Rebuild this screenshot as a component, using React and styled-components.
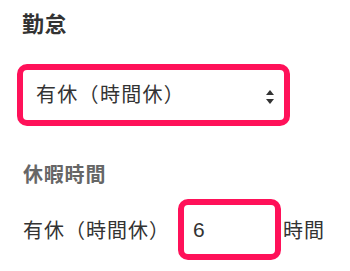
import styled, { createGlobalStyle } from "styled-components";

const Global = createGlobalStyle`
  body {
    margin: 0;
    background: #fff;
    font-family: "Liberation Sans", "Noto Sans CJK JP", sans-serif;
    color: #333;
  }
`;

const Page = styled.div`
  padding: 14px 0 0 17px;
`;

const Title = styled.h2`
  margin: 0 0 0 5px;
  font-size: 22px;
  line-height: 1;
  font-weight: bold;
  letter-spacing: 0.5px;
  color: #333;
`;

const SelectWrap = styled.div`
  position: relative;
  width: 273px;
  margin-top: 28px;
`;

const Select = styled.select`
  appearance: none;
  -webkit-appearance: none;
  display: block;
  width: 273px;
  height: 62px;
  box-sizing: border-box;
  border: 6px solid #ff1159;
  border-radius: 10px;
  background: #fff;
  padding: 0 0 0 13px;
  font-family: inherit;
  font-size: 20px;
  letter-spacing: 1.3px;
  color: #333;
  outline: none;
`;

const Arrows = styled.svg`
  position: absolute;
  right: 16px;
  top: 26px;
  pointer-events: none;
`;

const SubTitle = styled.h3`
  margin: 39px 0 0 6px;
  font-size: 20px;
  line-height: 1;
  font-weight: bold;
  letter-spacing: 0.8px;
  color: #666;
`;

const Row = styled.div`
  display: flex;
  align-items: center;
  margin-top: 14px;
`;

const Label = styled.span`
  margin-left: 6px;
  font-size: 20px;
  letter-spacing: 1px;
  color: #333;
`;

const Input = styled.input`
  width: 103px;
  height: 61px;
  box-sizing: border-box;
  margin-left: 8px;
  border: 6px solid #ff1159;
  border-radius: 10px;
  padding: 0 0 0 9px;
  font-family: inherit;
  font-size: 21px;
  color: #333;
  outline: none;
`;

const Unit = styled.span`
  margin-left: 2px;
  font-size: 20px;
  letter-spacing: 1px;
  color: #333;
`;

export default function App() {
  return (
    <>
      <Global />
      <Page>
        <Title>勤怠</Title>
        <SelectWrap>
          <Select defaultValue="hourly">
            <option value="hourly">有休（時間休）</option>
          </Select>
          <Arrows width="8" height="14" viewBox="0 0 8 14">
            <path d="M4 0 L8 5 L0 5 Z" fill="#333" />
            <path d="M0 9 L8 9 L4 14 Z" fill="#333" />
          </Arrows>
        </SelectWrap>
        <SubTitle>休暇時間</SubTitle>
        <Row>
          <Label>有休（時間休）</Label>
          <Input type="text" defaultValue="6" />
          <Unit>時間</Unit>
        </Row>
      </Page>
    </>
  );
}
